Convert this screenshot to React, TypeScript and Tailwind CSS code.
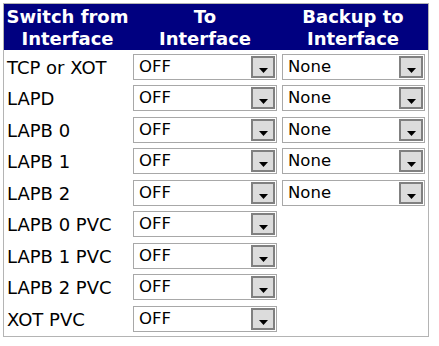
const rows: { name: string; backup: boolean }[] = [
  { name: 'TCP or XOT', backup: true },
  { name: 'LAPD', backup: true },
  { name: 'LAPB 0', backup: true },
  { name: 'LAPB 1', backup: true },
  { name: 'LAPB 2', backup: true },
  { name: 'LAPB 0 PVC', backup: false },
  { name: 'LAPB 1 PVC', backup: false },
  { name: 'LAPB 2 PVC', backup: false },
  { name: 'XOT PVC', backup: false },
];

function Select({ value }: { value: string }) {
  return (
    <div className="flex h-[26px] items-center justify-between border border-[#a8a8a8] bg-white">
      <span className="pl-[5px] text-[16.5px] leading-none text-black">{value}</span>
      <div className="mr-[1px] flex h-[22px] w-[24px] items-end justify-center border-2 border-[#808080] bg-[#dcdcdc] pb-[3px]">
        <svg width="9" height="5" viewBox="0 0 9 5">
          <path d="M0 0h9L4.5 5z" fill="#000" />
        </svg>
      </div>
    </div>
  );
}

export default function App() {
  return (
    <div className="min-h-screen bg-white pl-[3px] pt-[3px]" style={{ fontFamily: '"DejaVu Sans", Verdana, sans-serif' }}>
      <div className="w-[426px] border border-[#b4b4b4] pb-[3px]">
        <div className="grid grid-cols-[127px_148px_148px] bg-[#000080] pt-[2px] text-center text-[18px] font-bold leading-[22px] text-white">
          <div>Switch from<br />Interface</div>
          <div>To<br />Interface</div>
          <div>Backup to<br />Interface</div>
        </div>
        {rows.map((row, i) => (
          <div
            key={row.name}
            className={`grid grid-cols-[127px_148px_148px] items-start pt-[4px] ${i % 2 === 0 ? 'h-[31px]' : 'h-[32px]'}`}
          >
            <div className="flex h-[26px] items-center pl-[3px] text-[18px] text-black">{row.name}</div>
            <div className="pl-[2px] pr-[2px]">
              <Select value="OFF" />
            </div>
            <div className="pl-[3px] pr-[2px]">{row.backup && <Select value="None" />}</div>
          </div>
        ))}
      </div>
    </div>
  );
}
